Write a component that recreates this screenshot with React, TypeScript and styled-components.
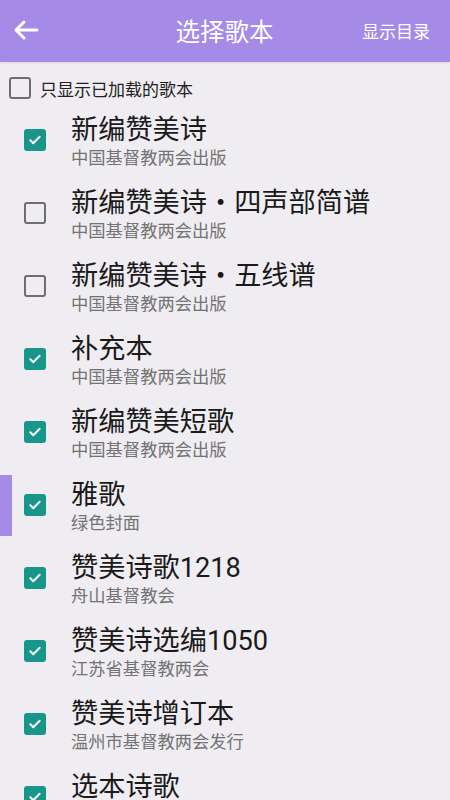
import styled, { createGlobalStyle } from "styled-components";

const books = [
  { title: "新编赞美诗", sub: "中国基督教两会出版", checked: true },
  { title: "新编赞美诗・四声部简谱", sub: "中国基督教两会出版", checked: false },
  { title: "新编赞美诗・五线谱", sub: "中国基督教两会出版", checked: false },
  { title: "补充本", sub: "中国基督教两会出版", checked: true },
  { title: "新编赞美短歌", sub: "中国基督教两会出版", checked: true },
  { title: "雅歌", sub: "绿色封面", checked: true, active: true },
  { title: "赞美诗歌1218", sub: "舟山基督教会", checked: true },
  { title: "赞美诗选编1050", sub: "江苏省基督教两会", checked: true },
  { title: "赞美诗增订本", sub: "温州市基督教两会发行", checked: true },
  { title: "选本诗歌", sub: "", checked: true },
];

const Check = ({ checked, size = 22 }: { checked: boolean; size?: number }) => (
  <CheckBox $checked={checked} $size={size}>
    {checked && (
      <svg width="14" height="14" viewBox="0 0 24 24">
        <path d="M4 12.5l5 5L20 6.5" fill="none" stroke="#fff" strokeWidth="3.4" strokeLinecap="round" strokeLinejoin="round" />
      </svg>
    )}
  </CheckBox>
);

const App = () => {
  return (
    <Page>
      <GlobalStyle />
      <Header>
        <Back>
          <svg width="26" height="22" viewBox="0 0 26 22">
            <path d="M24 11H3M11 3l-8 8 8 8" fill="none" stroke="#fff" strokeWidth="3" strokeLinecap="round" strokeLinejoin="round" />
          </svg>
        </Back>
        <Title>选择歌本</Title>
        <Action>显示目录</Action>
      </Header>
      <Filter>
        <Check checked={false} size={22} />
        <span>只显示已加载的歌本</span>
      </Filter>
      <List>
        {books.map((b) => (
          <Row key={b.title} $active={!!b.active}>
            <Check checked={b.checked} />
            <Texts>
              <BookTitle>{b.title}</BookTitle>
              <BookSub>{b.sub}</BookSub>
            </Texts>
          </Row>
        ))}
      </List>
    </Page>
  );
};

export default App;

const GlobalStyle = createGlobalStyle`
  body {
    margin: 0;
    background: #efedf1;
    font-family: Roboto, "Noto Sans CJK SC", sans-serif;
  }
`;

const Page = styled.div`
  width: 450px;
  height: 800px;
  overflow: hidden;
  background: #efedf1;
`;

const Header = styled.div`
  height: 62px;
  background: #a68ae8;
  display: flex;
  align-items: center;
  box-shadow: 0 1px 2px rgba(0, 0, 0, 0.08);
`;

const Back = styled.div`
  width: 62px;
  padding-left: 13px;
  box-sizing: border-box;
  display: flex;
  align-items: center;
  margin-top: -2px;
`;

const Title = styled.div`
  flex: 1;
  text-align: center;
  color: #fff;
  font-size: 24.5px;
  margin-left: 25px;
  margin-top: -2px;
`;

const Action = styled.div`
  color: #fff;
  font-size: 17px;
  padding-right: 20px;
  margin-top: -2px;
`;

const Filter = styled.div`
  display: flex;
  align-items: center;
  gap: 9px;
  height: 52px;
  padding-left: 9px;
  font-size: 17px;
  color: #222;
  span {
    margin-top: 1px;
  }
`;

const CheckBox = styled.div<{ $checked: boolean; $size: number }>`
  width: ${(p) => p.$size}px;
  height: ${(p) => p.$size}px;
  box-sizing: border-box;
  border-radius: 3px;
  flex-shrink: 0;
  display: flex;
  align-items: center;
  justify-content: center;
  background: ${(p) => (p.$checked ? "#19968a" : "transparent")};
  border: ${(p) => (p.$checked ? "none" : "2px solid #6e6e6e")};
`;

const List = styled.div`
  display: flex;
  flex-direction: column;
  margin-top: -11px;
`;

const Row = styled.div<{ $active: boolean }>`
  height: 73px;
  display: flex;
  align-items: center;
  gap: 25px;
  padding-left: 24px;
  position: relative;
  &::before {
    content: "";
    display: ${(p) => (p.$active ? "block" : "none")};
    position: absolute;
    left: 0;
    top: 7px;
    width: 12px;
    height: 61px;
    background: #a68ae8;
  }
`;

const Texts = styled.div`
  display: flex;
  flex-direction: column;
  margin-top: 4px;
`;

const BookTitle = styled.div`
  font-size: 27.2px;
  line-height: 30px;
  color: #1a1a1a;
`;

const BookSub = styled.div`
  font-size: 17.3px;
  line-height: 22px;
  height: 22px;
  color: #737373;
  margin-top: 2px;
`;
